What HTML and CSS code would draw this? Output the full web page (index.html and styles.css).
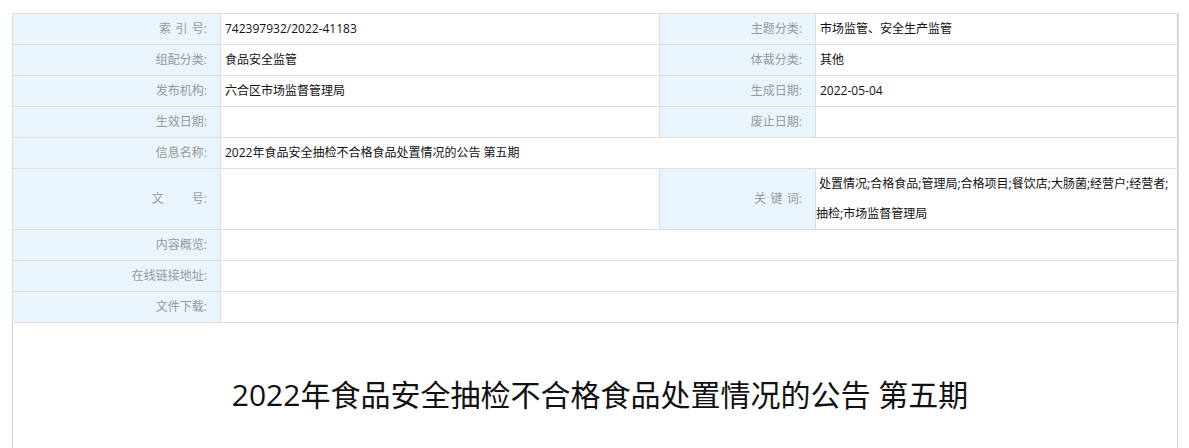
FILE: index.html
```html
<!DOCTYPE html>
<html lang="zh-CN">
<head>
  <meta charset="UTF-8">
  <title>2022年食品安全抽检不合格食品处置情况的公告 第五期</title>
  <link rel="stylesheet" href="styles.css">
</head>
<body>
  <div class="article">
    <table class="info-table">
      <colgroup>
        <col class="col-label">
        <col class="col-value">
        <col class="col-label2">
        <col class="col-value2">
      </colgroup>
      <tr>
        <td class="label"><span class="spaced">索 引 号</span>:</td>
        <td class="value">742397932/2022-41183</td>
        <td class="label">主题分类:</td>
        <td class="value">市场监管、安全生产监管</td>
      </tr>
      <tr>
        <td class="label">组配分类:</td>
        <td class="value">食品安全监管</td>
        <td class="label">体裁分类:</td>
        <td class="value">其他</td>
      </tr>
      <tr>
        <td class="label">发布机构:</td>
        <td class="value">六合区市场监督管理局</td>
        <td class="label">生成日期:</td>
        <td class="value">2022-05-04</td>
      </tr>
      <tr>
        <td class="label">生效日期:</td>
        <td class="value"></td>
        <td class="label">废止日期:</td>
        <td class="value"></td>
      </tr>
      <tr>
        <td class="label">信息名称:</td>
        <td class="value" colspan="3">2022年食品安全抽检不合格食品处置情况的公告 第五期</td>
      </tr>
      <tr>
        <td class="label">文<span class="gap"></span>号:</td>
        <td class="value"></td>
        <td class="label"><span class="spaced">关 键 词</span>:</td>
        <td class="keywords">&nbsp;处置情况;合格食品;管理局;合格项目;餐饮店;大肠菌;经营户;经营者;抽检;市场监督管理局</td>
      </tr>
      <tr>
        <td class="label">内容概览:</td>
        <td class="value" colspan="3"></td>
      </tr>
      <tr>
        <td class="label">在线链接地址:</td>
        <td class="value" colspan="3"></td>
      </tr>
      <tr>
        <td class="label">文件下载:</td>
        <td class="value" colspan="3"></td>
      </tr>
    </table>

    <h1 class="title">2022年食品安全抽检不合格食品处置情况的公告 第五期</h1>
  </div>
</body>
</html>
```

FILE: styles.css
```css
body {
  margin: 0;
  background-color: #fff;
  font-family: "Open Sans", "Noto Sans CJK SC", "Microsoft YaHei", sans-serif;
  font-size: 12px;
  color: #222;
}

.article {
  width: 1164px;
  margin: 13px 0 0 12px;
  border-left: 1px solid #cfcfcf;
  border-right: 1px solid #cfcfcf;
  min-height: 500px;
}

.info-table {
  width: 1166px;
  margin-left: -1px;
  border-collapse: collapse;
  table-layout: fixed;
}

.col-label {
  width: 208px;
}

.col-value {
  width: 439px;
}

.col-label2 {
  width: 156px;
}

.col-value2 {
  width: 363px;
}

.info-table td {
  border: 1px solid #dedede;
  height: 30px;
  line-height: 30px;
  padding: 0;
  vertical-align: middle;
}

.label {
  background-color: #e9f4fd;
  color: #999;
  text-align: right;
  padding-right: 13px !important;
}

.spaced {
  word-spacing: 1.3px;
}

.gap {
  display: inline-block;
  width: 28px;
}

.value {
  padding-left: 4px !important;
  color: #111;
}

.keywords {
  color: #111;
  text-align: left;
}

.title {
  margin: 0;
  padding: 49px 0 0 10px;
  text-align: center;
  font-size: 30px;
  font-weight: normal;
  line-height: 46px;
  color: #111;
}
```
